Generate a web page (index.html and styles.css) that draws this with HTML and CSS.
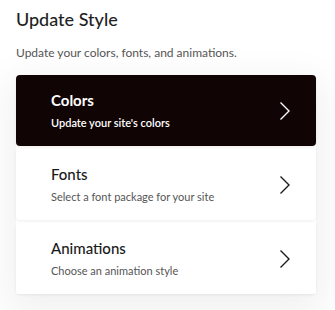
FILE: index.html
```html
<!doctype html>
<html lang="en">
<head>
    <meta charset="utf-8">
    <title>Update Style</title>
    <link rel="stylesheet" href="styles.css">
</head>
<body>
<div class="panel">
    <h1 class="panel-title">Update Style</h1>
    <p class="panel-desc">Update your colors, fonts, and animations.</p>
    <div class="options">
        <a class="option active" href="#colors">
            <div class="option-text">
                <div class="option-title">Colors</div>
                <div class="option-sub">Update your site's colors</div>
            </div>
            <svg class="chevron" width="12" height="20" viewBox="0 0 12 20"><path d="M1.5 1.5 L10 10 L1.5 18.5" fill="none" stroke="currentColor" stroke-width="1.4"/></svg>
        </a>
        <a class="option" href="#fonts">
            <div class="option-text">
                <div class="option-title">Fonts</div>
                <div class="option-sub">Select a font package for your site</div>
            </div>
            <svg class="chevron" width="12" height="20" viewBox="0 0 12 20"><path d="M1.5 1.5 L10 10 L1.5 18.5" fill="none" stroke="currentColor" stroke-width="1.4"/></svg>
        </a>
        <a class="option" href="#animations">
            <div class="option-text">
                <div class="option-title">Animations</div>
                <div class="option-sub">Choose an animation style</div>
            </div>
            <svg class="chevron" width="12" height="20" viewBox="0 0 12 20"><path d="M1.5 1.5 L10 10 L1.5 18.5" fill="none" stroke="currentColor" stroke-width="1.4"/></svg>
        </a>
    </div>
</div>
</body>
</html>
```

FILE: styles.css
```css
body {
	margin: 0;
	font-family: Lato, "Noto Sans", sans-serif;
	background: #fff;
	color: #222;
}
.panel {
	padding: 8px 16px 20px 16px;
}
.panel-title {
	margin: 0;
	font-size: 18px;
	font-weight: 500;
	line-height: 22px;
	color: #1f1f1f;
}
.panel-desc {
	margin: 15px 0 14px 0;
	font-size: 12px;
	line-height: 16px;
	color: #555;
}
.options {
	display: flex;
	flex-direction: column;
	gap: 3px;
	width: 300px;
	box-shadow: 0 12px 36px 8px rgba(0, 0, 0, 0.06);
}
.option {
	display: flex;
	align-items: center;
	justify-content: space-between;
	height: 71px;
	padding: 0 25px 0 35px;
	box-sizing: border-box;
	background: #fff;
	border-radius: 4px;
	box-shadow: 0 1px 3px rgba(0, 0, 0, 0.07);
	text-decoration: none;
	color: #1a1a1a;
}
.option.active {
	background: #110404;
	color: #fff;
}
.option-title {
	font-size: 15px;
	font-weight: 500;
	line-height: 18px;
}
.option.active .option-title {
	font-weight: 700;
}
.option-sub {
	margin-top: 7px;
	font-size: 11px;
	line-height: 14px;
	color: #555;
}
.option.active .option-sub {
	color: #fff;
	font-weight: 600;
}
.chevron {
	display: block;
}
```
